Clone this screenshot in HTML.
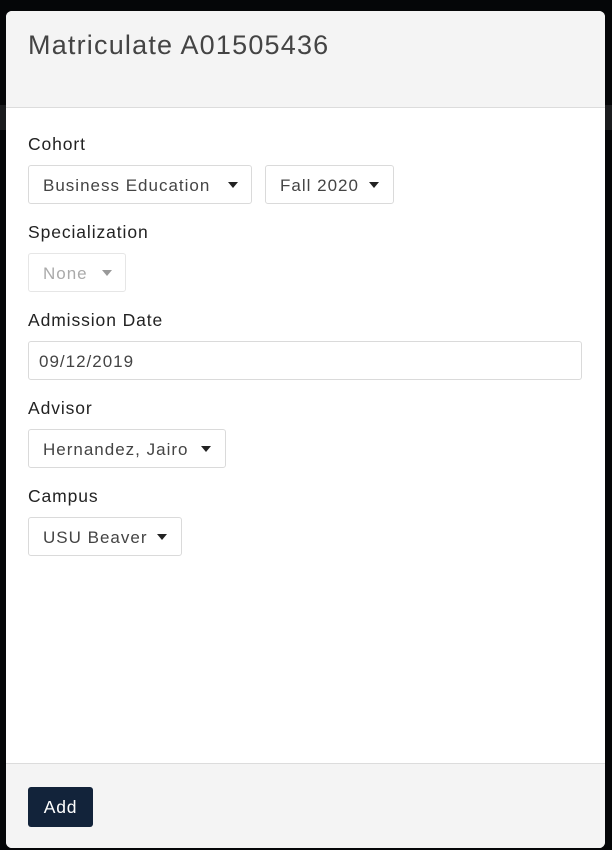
<!DOCTYPE html>
<html><head><style>
*{margin:0;padding:0;box-sizing:border-box}
body{width:612px;height:850px;background:#050608;position:relative;overflow:hidden;font-family:"Liberation Sans",sans-serif;color:#333}
.strip{position:absolute;left:0;width:612px;background:#1b1c1e}
.modal{position:absolute;left:6px;top:11px;width:599px;height:837px;background:#fff;border-radius:6px;overflow:hidden}
.hdr{position:absolute;left:0;top:0;width:100%;height:97px;background:#f4f4f4;border-bottom:1px solid #dcdcdc}
.hdr h1{position:absolute;left:22px;top:19px;font-weight:normal;font-size:27px;color:#444;letter-spacing:1.2px}
.ftr{position:absolute;left:0;top:752px;width:100%;height:85px;background:#f4f4f4;border-top:1px solid #dcdcdc}
.btn{position:absolute;left:22px;top:23px;width:65px;height:40px;background:#12233a;color:#fff;border-radius:3px;font-size:17.5px;letter-spacing:0.8px;text-align:center;line-height:40px}
.lbl{position:absolute;left:22px;font-size:17.5px;color:#222;letter-spacing:0.9px}
.sel{position:absolute;height:39px;border:1px solid #dadada;border-radius:3px;font-size:17px;letter-spacing:1px;line-height:39px;padding-left:14px;color:#444;background:#fff}
.sel .a{position:absolute;top:16px;width:0;height:0;border-left:5px solid transparent;border-right:5px solid transparent;border-top:6px solid #222}
.dis{color:#aaa;border-color:#e6e6e6}
.dis .a{border-top-color:#999}
</style></head><body>
<div class="strip" style="top:105px;height:25px"></div>
<div class="modal">
 <div class="hdr"><h1>Matriculate A01505436</h1></div>
 <div class="lbl" style="top:123px">Cohort</div>
 <div class="sel" style="left:22px;top:154px;width:224px">Business Education<span class="a" style="left:199px"></span></div>
 <div class="sel" style="left:259px;top:154px;width:129px">Fall 2020<span class="a" style="left:103px"></span></div>
 <div class="lbl" style="top:211px">Specialization</div>
 <div class="sel dis" style="left:22px;top:242px;width:98px">None<span class="a" style="left:73px"></span></div>
 <div class="lbl" style="top:299px">Admission Date</div>
 <div class="sel" style="left:22px;top:330px;width:554px;padding-left:10px">09/12/2019</div>
 <div class="lbl" style="top:387px">Advisor</div>
 <div class="sel" style="left:22px;top:418px;width:198px">Hernandez, Jairo<span class="a" style="left:172px"></span></div>
 <div class="lbl" style="top:475px">Campus</div>
 <div class="sel" style="left:22px;top:506px;width:154px">USU Beaver<span class="a" style="left:128px"></span></div>
 <div class="ftr"><div class="btn">Add</div></div>
</div>
</body></html>
